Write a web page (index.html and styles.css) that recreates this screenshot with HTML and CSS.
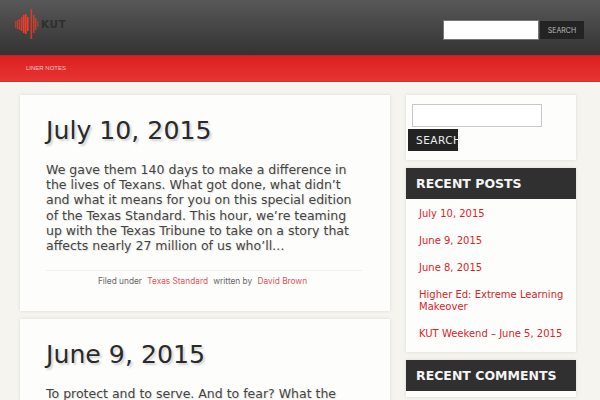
FILE: index.html
```html
<!DOCTYPE html>
<html lang="en">
<head>
  <meta charset="UTF-8">
  <title>Liner Notes</title>
  <link rel="stylesheet" href="styles.css">
</head>
<body>

<header class="top">
  <a class="logo" href="#">
    <svg width="24" height="30" viewBox="0 0 24 30">
      <defs>
        <filter id="soft" x="-20%" y="-20%" width="140%" height="140%"><feGaussianBlur stdDeviation="0.4"/></filter>
      </defs>
      <g fill="#f23a26" filter="url(#soft)">
        <rect x="0" y="12" width="1.4" height="7" opacity=".6"/>
        <rect x="2" y="11" width="1.4" height="9" opacity=".7"/>
        <rect x="4" y="10" width="1.4" height="11" opacity=".8"/>
        <rect x="6" y="8" width="1.5" height="14" opacity=".9"/>
        <rect x="8" y="6" width="1.600" height="18"/>
        <rect x="10" y="5" width="1.600" height="20"/>
        <rect x="12" y="8" width="1.600" height="14"/>
        <rect x="15.500" y="0" width="1.600" height="30" opacity=".8"/>
        <rect x="18" y="6" width="1.500" height="18" opacity=".8"/>
        <rect x="20" y="9" width="1.400" height="12" opacity=".7"/>
        <rect x="22" y="12" width="1.400" height="6" opacity=".5"/>
      </g>
    </svg>
    <span class="logo-text">KUT</span>
  </a>
  <form class="top-search">
    <input type="text">
    <button type="button">SEARCH</button>
  </form>
</header>

<nav class="menu"><a href="#">LINER NOTES</a></nav>

<div class="wrap">
  <main class="posts">
    <article class="card post">
      <h2>July 10, 2015</h2>
      <p>We gave them 140 days to make a difference in the lives of Texans. What got done, what didn’t and what it means for you on this special edition of the Texas Standard. This hour, we’re teaming up with the Texas Tribune to take on a story that affects nearly 27 million of us who’ll…</p>
      <div class="meta">Filed under <a href="#">Texas Standard</a> written by <a href="#">David Brown</a></div>
    </article>
    <article class="card post">
      <h2>June 9, 2015</h2>
      <p>To protect and to serve. And to fear? What the</p>
    </article>
  </main>

  <aside class="side">
    <div class="card side-search">
      <input type="text">
      <button type="button">SEARCH</button>
    </div>
    <div class="card widget">
      <h3>RECENT POSTS</h3>
      <ul>
        <li><a href="#">July 10, 2015</a></li>
        <li><a href="#">June 9, 2015</a></li>
        <li><a href="#">June 8, 2015</a></li>
        <li><a href="#">Higher Ed: Extreme Learning Makeover</a></li>
        <li><a href="#">KUT Weekend – June 5, 2015</a></li>
      </ul>
    </div>
    <div class="card widget last">
      <h3>RECENT COMMENTS</h3>
    </div>
  </aside>
</div>

</body>
</html>
```

FILE: styles.css
```css
html, body {
  height: 400px;
  overflow: hidden;
}

body {
  margin: 0;
  background-color: #f5f4ee;
  font-family: "DejaVu Sans", sans-serif;
  color: #333;
}

a {
  text-decoration: none;
}

.top {
  height: 55px;
  background: linear-gradient(#585858, #333);
  display: flex;
  justify-content: space-between;
  align-items: flex-start;
}

.logo {
  display: flex;
  align-items: center;
  margin: 9px 0 0 15px;
}

.logo-text {
  margin-left: 2px;
  font-size: 10.500px;
  font-weight: bold;
  letter-spacing: .5px;
  color: #2f2f2f;
}

.top-search {
  display: flex;
  margin: 20px 16px 0 0;
}

.top-search input {
  box-sizing: border-box;
  width: 96px;
  height: 20px;
  margin: 0 1px 0 0;
  border: 1px solid #777;
  background: #fff;
}

.top-search button {
  width: 44px;
  height: 18px;
  margin-top: 1px;
  padding: 0;
  border: 0;
  background: #232323;
  color: #bbb;
  font-family: "Inter", sans-serif;
  font-size: 7px;
}

.menu {
  height: 27px;
  border-top: 1px solid #c92020;
  border-bottom: 1px solid #d83030;
  box-sizing: border-box;
  background: linear-gradient(#da2020, #e83434);
  padding-left: 26px;
  line-height: 25px;
  font-family: "Liberation Sans", sans-serif;
  font-size: 6px;
}

.menu a {
  color: #f6c9c9;
}

.wrap {
  display: flex;
  align-items: flex-start;
  gap: 16px;
  padding: 13px 24px 0 20px;
}

.posts {
  width: 370px;
}

.side {
  width: 170px;
}

.card {
  background: #fdfdfb;
  box-shadow: 0 0 3px #d8d8d2;
  margin-bottom: 8px;
}

.post {
  padding: 20px 28px 0 26px;
}

.post h2 {
  margin: 0 0 15px;
  font-size: 25.200px;
  font-weight: normal;
  line-height: 32px;
  color: #2a2a2a;
  text-shadow: 2px 2px 2px #d4d4d4;
}

.post p {
  margin: 0;
  font-size: 12.500px;
  line-height: 15.200px;
  color: #444;
  text-shadow: 1px 1px 1px #ddd;
}

.meta {
  margin-top: 17px;
  border-top: 1px solid #f2f1ec;
  height: 40px;
  line-height: 21px;
  text-align: center;
  font-family: "Inter", sans-serif;
  font-size: 8.300px;
  color: #666;
}

.meta a {
  margin: 0 3px;
  color: #e0555a;
}

.side-search {
  padding: 9px 6px;
  height: 47px;
}

.side-search input {
  display: block;
  box-sizing: border-box;
  width: 130px;
  height: 23px;
  margin: 0 0 2px;
  border: 1px solid #c8c8c8;
}

.side-search button {
  display: block;
  width: 50px;
  height: 22px;
  margin-left: -4px;
  padding: 0 0 0 8px;
  border: 0;
  background: #232323;
  color: #eee;
  font-family: inherit;
  font-size: 10.500px;
  letter-spacing: .5px;
  text-align: left;
}

.widget h3 {
  margin: 0;
  height: 31px;
  padding-left: 10px;
  background: #303030;
  color: #f5f5f5;
  font-size: 12.500px;
  font-weight: bold;
  line-height: 31px;
}

.widget ul {
  list-style: none;
  margin: 0;
  padding: 9px 10px 5px 13px;
}

.widget li {
  margin-bottom: 15px;
  font-size: 10px;
  line-height: 12px;
}

.widget li:last-child {
  margin-bottom: 0;
  padding-bottom: 7px;
}

.widget a {
  color: #dc2428;
}

.last {
  padding-bottom: 6px;
}
```
